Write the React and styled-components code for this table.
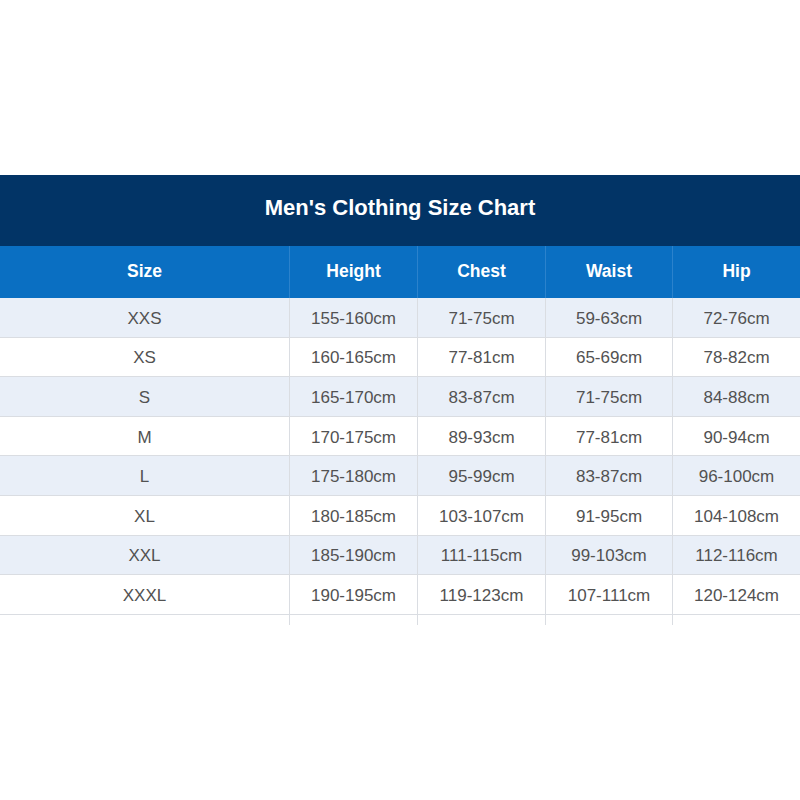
import React from 'react'
import styled, { createGlobalStyle } from 'styled-components'

const GlobalStyle = createGlobalStyle`
  html, body {
    margin: 0;
    padding: 0;
    background: #ffffff;
    font-family: "Liberation Sans", Arial, sans-serif;
  }
`;

const Page = styled.div`
  width: 800px;
  height: 800px;
  padding-top: 175px;
  box-sizing: border-box;
  background: #ffffff;
`;

const Title = styled.div`
  height: 71px;
  background: #023466;
  color: #ffffff;
  font-size: 22px;
  font-weight: bold;
  display: flex;
  align-items: center;
  justify-content: center;
  padding-bottom: 6px;
  box-sizing: border-box;
`;

const Grid = styled.div`
  display: grid;
  grid-template-columns: 289px 128px 128px 127px 1fr;
`;

const HeadCell = styled.div`
  height: 52px;
  box-sizing: border-box;
  padding-bottom: 2px;
  background: #0a6fc2;
  color: #ffffff;
  font-size: 17.5px;
  font-weight: bold;
  display: flex;
  align-items: center;
  justify-content: center;
  border-left: ${p => (p.first ? 'none' : '1px solid #2b82cc')};
`;

const Cell = styled.div`
  height: ${p => (p.stub ? '10px' : '39.6px')};
  box-sizing: border-box;
  padding-top: ${p => (p.stub ? '0' : '3px')};
  background: ${p => (p.shade ? '#e9eff8' : '#ffffff')};
  color: #525252;
  font-size: 17px;
  display: flex;
  align-items: center;
  justify-content: center;
  border-bottom: ${p => (p.stub ? 'none' : '1px solid #dadde2')};
  border-left: ${p => (p.first ? 'none' : '1px solid #dadde2')};
`;

const headers = ['Size', 'Height', 'Chest', 'Waist', 'Hip']

const rows = [
  ['XXS', '155-160cm', '71-75cm', '59-63cm', '72-76cm'],
  ['XS', '160-165cm', '77-81cm', '65-69cm', '78-82cm'],
  ['S', '165-170cm', '83-87cm', '71-75cm', '84-88cm'],
  ['M', '170-175cm', '89-93cm', '77-81cm', '90-94cm'],
  ['L', '175-180cm', '95-99cm', '83-87cm', '96-100cm'],
  ['XL', '180-185cm', '103-107cm', '91-95cm', '104-108cm'],
  ['XXL', '185-190cm', '111-115cm', '99-103cm', '112-116cm'],
  ['XXXL', '190-195cm', '119-123cm', '107-111cm', '120-124cm'],
]

const App = () => {
  return (
    <Page>
      <GlobalStyle />
      <Title>Men's Clothing Size Chart</Title>
      <Grid>
        {headers.map((h, i) => (
          <HeadCell key={h} first={i === 0}>{h}</HeadCell>
        ))}
        {rows.map((row, r) =>
          row.map((val, c) => (
            <Cell key={r + '-' + c} first={c === 0} shade={r % 2 === 0}>{val}</Cell>
          ))
        )}
        {headers.map((h, i) => (
          <Cell key={'stub-' + h} first={i === 0} stub />
        ))}
      </Grid>
    </Page>
  )
}

export default App
